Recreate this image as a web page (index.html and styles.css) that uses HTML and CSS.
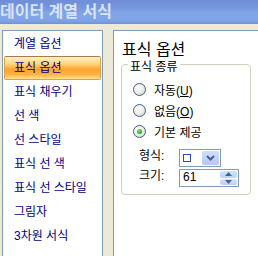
FILE: index.html
```html
<!DOCTYPE html>
<html>
<head>
<meta charset="utf-8">
<title>데이터 계열 서식</title>
<link rel="stylesheet" href="styles.css">
</head>
<body>

<div class="titlebar">데이터 계열 서식</div>

<div class="dialog">

	<ul class="nav">
		<li>계열 옵션</li>
		<li class="sel">표식 옵션</li>
		<li>표식 채우기</li>
		<li>선 색</li>
		<li>선 스타일</li>
		<li>표식 선 색</li>
		<li>표식 선 스타일</li>
		<li>그림자</li>
		<li>3차원 서식</li>
	</ul>

	<div class="page">
		<div class="page-title">표식 옵션</div>

		<div class="group">
			<span class="legend">표식 종류</span>

			<div class="radio-row"><span class="radio"></span><span>자동(<u>U</u>)</span></div>
			<div class="radio-row"><span class="radio"></span><span>없음(<u>O</u>)</span></div>
			<div class="radio-row"><span class="radio on"></span><span>기본 제공</span></div>

			<div class="field first">
				<span class="field-label">형식:</span>
				<div class="combo">
					<span class="swatch"></span>
					<span class="drop">
						<svg width="9" height="6" viewBox="0 0 9 6"><path d="M1 1 L4.5 4.5 L8 1" fill="none" stroke="#4d6185" stroke-width="2"/></svg>
					</span>
				</div>
			</div>

			<div class="field">
				<span class="field-label">크기:</span>
				<div class="spin">
					<span class="spin-value">61</span>
					<span class="spin-btns">
						<span class="spin-btn"><svg width="7" height="4" viewBox="0 0 7 4"><path d="M0 4 L3.5 0 L7 4 Z" fill="#4d6185"/></svg></span>
						<span class="spin-btn"><svg width="7" height="4" viewBox="0 0 7 4"><path d="M0 0 L3.5 4 L7 0 Z" fill="#4d6185"/></svg></span>
					</span>
				</div>
			</div>
		</div>
	</div>

</div>

</body>
</html>
```

FILE: styles.css
```css
html, body {
	margin: 0;
	height: 100%;
}

body {
	background: #ece9d8;
	font-family: "Liberation Sans", "Noto Sans CJK KR", sans-serif;
	font-size: 12px;
	display: flex;
	flex-direction: column;
	overflow: hidden;
}

.titlebar {
	height: 24px;
	line-height: 23px;
	font-size: 16px;
	font-weight: bold;
	color: #d8e4f8;
	white-space: nowrap;
	background: linear-gradient(to bottom, #6f8ed8 0%, #7594dc 30%, #80a6e7 55%, #7fa4e6 85%, #7090d8 100%);
}

.dialog {
	flex: 1;
	display: flex;
	padding: 6px 0 0 2px;
}

.nav {
	list-style: none;
	margin: 0;
	padding: 1px 0 0 0;
	width: 101px;
	box-sizing: border-box;
	background: #fff;
	border: 1px solid #7f9db9;
	border-bottom: none;
}

.nav li {
	height: 24px;
	line-height: 24px;
	margin: 0 1px;
	padding-left: 10px;
	color: #00007f;
	white-space: nowrap;
	box-sizing: border-box;
}

.nav li.sel {
	border: 1px solid #dca24a;
	border-top-color: #a87a48;
	border-radius: 2px;
	line-height: 22px;
	padding-left: 9px;
	background: linear-gradient(to bottom, #fff2c8 0%, #ffd680 30%, #ffa22c 58%, #ffb446 80%, #ffe08e 100%);
}

.page {
	flex: 1;
	margin-left: 10px;
	padding: 9px 0 0 7px;
	background: #fff;
	border: 1px solid #7f9db9;
	border-right: none;
	border-bottom: none;
}

.page-title {
	font-size: 16px;
	line-height: 19px;
	margin-left: 1px;
	color: #000;
}

.group {
	position: relative;
	margin-top: 5px;
	width: 130px;
	box-sizing: border-box;
	border: 1px solid #d0d0bf;
	border-radius: 4px;
	padding: 14px 0 7px 11px;
}

.legend {
	position: absolute;
	top: -4px;
	left: 6px;
	padding: 0 2px;
	line-height: 12px;
	background: #fff;
}

.radio-row {
	display: flex;
	align-items: center;
	height: 21px;
	gap: 8px;
}

.radio {
	width: 13px;
	height: 13px;
	box-sizing: border-box;
	border-radius: 50%;
	border: 1px solid #3d5f8a;
	background: radial-gradient(circle at 40% 35%, #ffffff 0%, #f0f0ea 45%, #cfcfc6 100%);
	position: relative;
}

.radio.on::after {
	content: "";
	position: absolute;
	left: 3px;
	top: 3px;
	width: 5px;
	height: 5px;
	border-radius: 50%;
	background: radial-gradient(circle at 40% 35%, #7fe07f 0%, #22a822 70%);
}

.field {
	display: flex;
	margin-left: 6px;
	margin-top: 2px;
	height: 18px;
}

.field.first {
	margin-top: 7px;
}

.field-label {
	width: 40px;
	line-height: 12px;
	padding-top: 1px;
}

.combo,
.spin {
	box-sizing: border-box;
	height: 18px;
	border: 1px solid #7f9db9;
	background: #fff;
	display: flex;
	align-items: stretch;
	justify-content: space-between;
}

.combo {
	width: 42px;
}

.spin {
	width: 60px;
}

.swatch {
	align-self: center;
	width: 6px;
	height: 6px;
	margin-left: 3px;
	border: 1px solid #2050c0;
}

.drop {
	width: 17px;
	margin: 1px;
	border-radius: 2px;
	background: linear-gradient(to bottom, #d2defb 0%, #c1d3fb 50%, #b4c8f6 100%);
	display: flex;
	align-items: center;
	justify-content: center;
}

.spin-value {
	padding-left: 3px;
	line-height: 15px;
}

.spin-btns {
	width: 17px;
	margin: 1px;
	display: flex;
	flex-direction: column;
	gap: 1px;
}

.spin-btn {
	flex: 1;
	border-radius: 2px;
	background: linear-gradient(to bottom, #d6e2fc 0%, #bccff9 100%);
	display: flex;
	align-items: center;
	justify-content: center;
}
```
